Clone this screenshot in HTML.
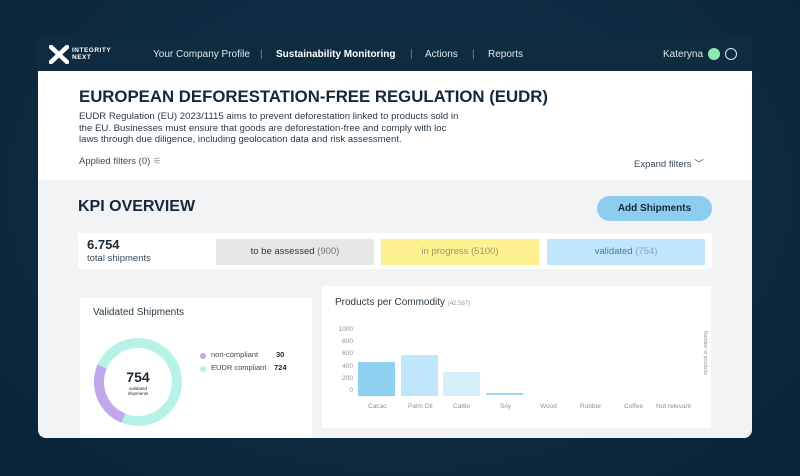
<!DOCTYPE html>
<html><head><meta charset="utf-8"><style>
*{margin:0;padding:0;box-sizing:border-box}
body{width:800px;height:476px;overflow:hidden;background:radial-gradient(ellipse at 50% 40%,#123650 0%,#0c2a40 60%,#0a2437 100%);font-family:"Liberation Sans",sans-serif;position:relative;color:#1a2a36}
.abs{position:absolute}
.panel{left:38px;top:38px;width:714px;height:400px;background:#f2f3f4;border-radius:0 0 8px 8px;overflow:hidden}
.nav{left:0;top:0;width:714px;height:33px;background:#0f2b40;color:#dfe6ec;font-size:10px}
.nav span{position:absolute;top:11px}
.head{left:0;top:33px;width:714px;height:109px;background:#fff}
</style></head><body>
<div class="abs panel">
 <div class="abs nav">
  <svg class="abs" style="left:11px;top:7px" width="20" height="19" viewBox="0 0 20 19"><path d="M2 2 L18 17 M18 2 L2 17" stroke="#fff" stroke-width="4.5" stroke-linecap="round"/></svg>
  <span style="left:34px;top:9px;font-size:6.5px;font-weight:bold;line-height:7px;letter-spacing:.5px;color:#fff">INTEGRITY<br>NEXT</span>
  <span style="left:115px">Your Company Profile</span>
  <span style="left:222px;color:#7a8a96">|</span>
  <span style="left:238px;font-weight:bold;color:#fff">Sustainability Monitoring</span>
  <span style="left:372px;color:#7a8a96">|</span>
  <span style="left:387px">Actions</span>
  <span style="left:434px;color:#7a8a96">|</span>
  <span style="left:450px">Reports</span>
  <span style="left:625px">Kateryna</span>
  <div class="abs" style="left:670px;top:10px;width:12px;height:12px;border-radius:50%;background:#8ee8b4"></div>
  <div class="abs" style="left:687px;top:10px;width:12px;height:12px;border-radius:50%;border:1.3px solid #dfe6ec"></div>
 </div>
 <div class="abs head">
  <div class="abs" style="left:41px;top:16px;font-size:16.8px;font-weight:bold;color:#14283a;white-space:nowrap">EUROPEAN DEFORESTATION-FREE REGULATION (EUDR)</div>
  <div class="abs" style="left:41px;top:40px;font-size:9.6px;line-height:11.5px;color:#2a3a46;white-space:nowrap">EUDR Regulation (EU) 2023/1115 aims to prevent deforestation linked to products sold in<br>the EU. Businesses must ensure that goods are deforestation-free and comply with loc<br>laws through due diligence, including geolocation data and risk assessment.</div>
  <div class="abs" style="left:41px;top:85px;font-size:9.5px;color:#3a4a56">Applied filters (0) <span style="color:#8a98a4">⚟</span></div>
  <div class="abs" style="left:596px;top:85px;font-size:9.5px;color:#3a4a56">Expand filters ﹀</div>
 </div>
 <div class="abs" style="left:40px;top:160px;font-size:16px;font-weight:bold;color:#14283a">KPI OVERVIEW</div>
 <div class="abs" style="left:559px;top:158px;width:115px;height:25px;border-radius:13px;background:#8ecdf0;font-size:10px;font-weight:bold;color:#14283a;text-align:center;line-height:25px">Add Shipments</div>
 <div class="abs" style="left:40px;top:195px;width:634px;height:36px;background:#fff">
  <div class="abs" style="left:9px;top:4px;font-size:13px;font-weight:bold">6.754</div>
  <div class="abs" style="left:9px;top:20px;font-size:9.5px;color:#3a4a56">total shipments</div>
  <div class="abs" style="left:138px;top:6px;width:158px;height:26px;background:#e6e6e6;font-size:9.5px;text-align:center;line-height:26px;color:#2a3a46">to be assessed <span style="color:#777">(900)</span></div>
  <div class="abs" style="left:303px;top:6px;width:158px;height:26px;background:#fdf08e;font-size:9.5px;text-align:center;line-height:26px;color:#9a9a70">in progress (5100)</div>
  <div class="abs" style="left:469px;top:6px;width:158px;height:26px;background:#bfe6fa;font-size:9.5px;text-align:center;line-height:26px;color:#4a7a96">validated <span style="color:#8aaabb">(754)</span></div>
 </div>
 <div class="abs" style="left:42px;top:260px;width:232px;height:145px;background:#fff">
  <div class="abs" style="left:13px;top:9px;font-size:10px;color:#2a3a46">Validated Shipments</div>
  <svg class="abs" style="left:14px;top:40px" width="88" height="88" viewBox="0 0 88 88">
   <circle cx="44" cy="44" r="39" fill="none" stroke="#b6f2e6" stroke-width="10"/>
   <circle cx="44" cy="44" r="39" fill="none" stroke="#c1a8ec" stroke-width="10" stroke-dasharray="62 300" transform="rotate(112 44 44)"/>
  </svg>
  <div class="abs" style="left:36px;top:71px;width:44px;text-align:center;font-size:14px;font-weight:bold">754</div>
  <div class="abs" style="left:36px;top:88px;width:44px;text-align:center;font-size:4.5px;line-height:5px">validated<br>shipments</div>
  <div class="abs" style="left:120px;top:55px;width:6px;height:6px;border-radius:50%;background:#c1a8ec"></div>
  <div class="abs" style="left:131px;top:52px;font-size:7.5px;color:#3a4a56">non-compliant</div>
  <div class="abs" style="left:196px;top:52px;font-size:7.5px;font-weight:bold">30</div>
  <div class="abs" style="left:120px;top:68px;width:6px;height:6px;border-radius:50%;background:#b6f2e6"></div>
  <div class="abs" style="left:131px;top:65px;font-size:7.5px;color:#3a4a56">EUDR compliant</div>
  <div class="abs" style="left:194px;top:65px;font-size:7.5px;font-weight:bold">724</div>
 </div>
 <div class="abs" style="left:284px;top:248px;width:389px;height:142px;background:#fff;font-size:6.5px;color:#8a949c">
  <div class="abs" style="left:13px;top:11px;font-size:10px;color:#2a3a46">Products per Commodity <span style="font-size:6px;color:#999">(42.587)</span></div>
  <div class="abs" style="left:5px;top:38px;width:26px;text-align:right;line-height:12.2px">1000<br>800<br>600<br>400<br>200<br>0</div>
  <div class="abs" style="left:36px;top:76px;width:37px;height:34px;background:#8fd0f0"></div>
  <div class="abs" style="left:79px;top:69px;width:37px;height:41px;background:#bfe6fa"></div>
  <div class="abs" style="left:121px;top:86px;width:37px;height:24px;background:#d6eefb"></div>
  <div class="abs" style="left:164px;top:107px;width:37px;height:2px;background:#9fd6ee"></div>
  <div class="abs" style="top:117px;left:36px;width:340px">
   <span class="abs" style="left:10px">Cacao</span><span class="abs" style="left:50px">Palm Oil</span><span class="abs" style="left:95px">Cattle</span><span class="abs" style="left:142px">Soy</span><span class="abs" style="left:182px">Wood</span><span class="abs" style="left:222px">Rubber</span><span class="abs" style="left:266px">Coffee</span><span class="abs" style="left:298px">Not relevant</span>
  </div>
  <div class="abs" style="font-size:5px;transform:rotate(90deg);transform-origin:left top;white-space:nowrap;left:386px;top:45px">Number of products</div>
 </div>
</div>
</body></html>
